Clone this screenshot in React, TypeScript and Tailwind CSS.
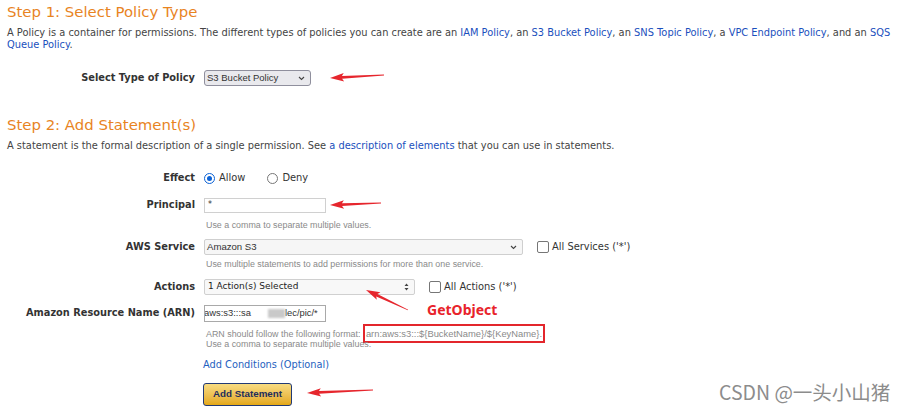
import React from "react"

const arrows = [
  { tail: [384, 75], head: [330, 78] },
  { tail: [381, 203], head: [330, 205] },
  { tail: [408, 310], head: [366, 290] },
  { tail: [373, 390], head: [307, 393] },
]

function arrowPts(t: number[], h: number[]) {
  const dx = h[0] - t[0], dy = h[1] - t[1]
  const len = Math.hypot(dx, dy)
  const ux = dx / len, uy = dy / len
  const nx = -uy, ny = ux
  const hl = 12, hw = 4.2
  const bx = h[0] - ux * hl, by = h[1] - uy * hl
  const nb = 1.4
  const pts = [
    [t[0] + nx * 0.4, t[1] + ny * 0.4],
    [bx + nx * nb, by + ny * nb],
    [bx - ux * 2 + nx * hw, by - uy * 2 + ny * hw],
    [h[0], h[1]],
    [bx - ux * 2 - nx * hw, by - uy * 2 - ny * hw],
    [bx - nx * nb, by - ny * nb],
    [t[0] - nx * 0.4, t[1] - ny * 0.4],
  ]
  return pts.map(p => p.join(",")).join(" ")
}

function Row({ label, className = "", children }: any) {
  return (
    <div className={"flex items-center " + className}>
      <div className="w-[188px] text-right font-bold text-[9.8px] text-[#333] whitespace-nowrap">{label}</div>
      <div className="ml-[9px] flex items-center">{children}</div>
    </div>
  )
}

function Chevron() {
  return (
    <svg width="7" height="5" viewBox="0 0 7 5" className="shrink-0">
      <path d="M1 1 L3.5 3.5 L6 1" fill="none" stroke="#444" strokeWidth="1.1" />
    </svg>
  )
}

function Check({ label }: { label: string }) {
  return (
    <div className="flex items-center gap-[3px]">
      <span className="w-[12px] h-[12px] border border-[#767676] rounded-[2px] bg-white" />
      <span className="text-[9.9px] text-[#333]">{label}</span>
    </div>
  )
}

function Help({ children, className = "" }: any) {
  return (
    <div className={"ml-[197px] pl-[2px] font-['Liberation_Sans',sans-serif] text-[8.9px] leading-[11px] text-[#8a8a8a] whitespace-nowrap " + className}>
      {children}
    </div>
  )
}

const link = "text-[#1a4fbd]"

export default function App() {
  return (
    <div className="relative w-[907px] h-[410px] overflow-hidden bg-white px-[7px] pt-[3px] font-['DejaVu_Sans',sans-serif] text-[#444]">
      <h2 className="text-[14.9px] leading-[18px] text-[#e8841f]">Step 1: Select Policy Type</h2>
      <p className="mt-[6px] text-[9.85px] leading-[12px] whitespace-nowrap">
        A Policy is a container for permissions. The different types of policies you can create are an{" "}
        <span className={link}>IAM Policy</span>, an <span className={link}>S3 Bucket Policy</span>, an{" "}
        <span className={link}>SNS Topic Policy</span>, a <span className={link}>VPC Endpoint Policy</span>, and an{" "}
        <span className={link}>SQS</span>
        <br />
        <span className={link}>Queue Policy</span>.
      </p>

      <Row label="Select Type of Policy" className="mt-[19px]">
        <div className="w-[107px] h-[16px] bg-[#e9e9ed] border border-[#8f8f9d] rounded-[3px] flex items-center justify-between pl-[2px] pr-[5px] font-['Liberation_Sans',sans-serif] text-[9.5px] text-[#333]">
          <span>S3 Bucket Policy</span>
          <Chevron />
        </div>
      </Row>

      <h2 className="mt-[30px] text-[14.9px] leading-[18px] text-[#e8841f]">Step 2: Add Statement(s)</h2>
      <p className="mt-[6px] text-[9.85px] leading-[12px] whitespace-nowrap">
        A statement is the formal description of a single permission. See{" "}
        <span className={link}>a description of elements</span> that you can use in statements.
      </p>

      <Row label="Effect" className="mt-[19px] h-[14px]">
        <span className="w-[11px] h-[11px] rounded-full border border-[#0b62d6] flex items-center justify-center">
          <span className="w-[5px] h-[5px] rounded-full bg-[#0b62d6]" />
        </span>
        <span className="ml-[4px] text-[9.9px] text-[#333]">Allow</span>
        <span className="ml-[22px] w-[11px] h-[11px] rounded-full border border-[#777]" />
        <span className="ml-[4px] text-[9.9px] text-[#333]">Deny</span>
      </Row>

      <Row label="Principal" className="mt-[13px]">
        <div className="w-[122px] h-[15px] border border-[#d0d0d0] pl-[3px] text-[8px] leading-[11px] text-[#333]">*</div>
      </Row>
      <Help className="mt-[7px]">Use a comma to separate multiple values.</Help>

      <Row label="AWS Service" className="mt-[8px]">
        <div className="w-[319px] h-[16px] bg-[#f6f6f6] border border-[#cfcfcf] rounded-[2px] flex items-center justify-between pl-[2px] pr-[5px] font-['Liberation_Sans',sans-serif] text-[9.6px] text-[#333]">
          <span>Amazon S3</span>
          <Chevron />
        </div>
        <div className="ml-[14px]">
          <Check label="All Services ('*')" />
        </div>
      </Row>
      <Help className="mt-[4px]">Use multiple statements to add permissions for more than one service.</Help>

      <Row label="Actions" className="mt-[9px]">
        <div className="w-[211px] h-[16px] bg-[#f8f8f8] border border-[#d0d0d0] rounded-[2px] flex items-center justify-between pl-[3px] pr-[5px] text-[9px] text-[#222]">
          <span>1 Action(s) Selected</span>
          <svg width="5" height="8" viewBox="0 0 5 8">
            <path d="M2.5 0.5 L4.5 3 L0.5 3 Z M2.5 7.5 L4.5 5 L0.5 5 Z" fill="#444" />
          </svg>
        </div>
        <div className="ml-[14px]">
          <Check label="All Actions ('*')" />
        </div>
      </Row>

      <Row label="Amazon Resource Name (ARN)" className="mt-[10px]">
        <div className="w-[122px] h-[17px] border border-[#a9a9a9] flex items-center overflow-hidden font-['Liberation_Sans',sans-serif] text-[9.4px] text-[#333] whitespace-nowrap">
          <span className="-ml-[1px]">aws:s3:::sa</span>
          <span className="w-[17px]" />
          <span className="w-[17px] h-[9px] bg-[#c9c9c9] blur-[1px]" />
          <span>lec/pic/*</span>
        </div>
      </Row>
      <Help className="mt-[7px] !leading-[10px]">
        ARN should follow the following format:{" "}
        <span className="border-2 border-[#e3262c] py-[2px] px-[1px] text-[9.4px]">arn:aws:s3:::${"{BucketName}"}/${"{KeyName}"}.</span>
        <br />
        Use a comma to separate multiple values.
      </Help>

      <div className="mt-[9px] ml-[196px] text-[9.8px] leading-[14px] text-[#1f5fc0]">Add Conditions (Optional)</div>

      <div className="mt-[8px] ml-[196px]">
        <button className="w-[89px] h-[23px] rounded-[3px] border-[1.5px] border-[#233a74] bg-gradient-to-b from-[#f8dc80] to-[#e4a812] font-['Liberation_Sans',sans-serif] font-bold text-[9.8px] text-[#1e2e5c]">
          Add Statement
        </button>
      </div>

      <div className="absolute left-[427px] top-[301px] font-['Noto_Sans',sans-serif] font-bold text-[14px] leading-[18px] text-[#e8232b]">GetObject</div>

      <div className="absolute left-[719px] top-[379px] font-['Noto_Sans_CJK_SC',sans-serif] text-[19.5px] leading-[26px] text-[#8c8c8c] whitespace-nowrap">
        CSDN @一头小山猪
      </div>

      <svg className="absolute inset-0 pointer-events-none" width="907" height="410">
        {arrows.map((a, i) => (
          <polygon key={i} points={arrowPts(a.tail, a.head)} fill="#e6262d" />
        ))}
      </svg>
    </div>
  )
}
